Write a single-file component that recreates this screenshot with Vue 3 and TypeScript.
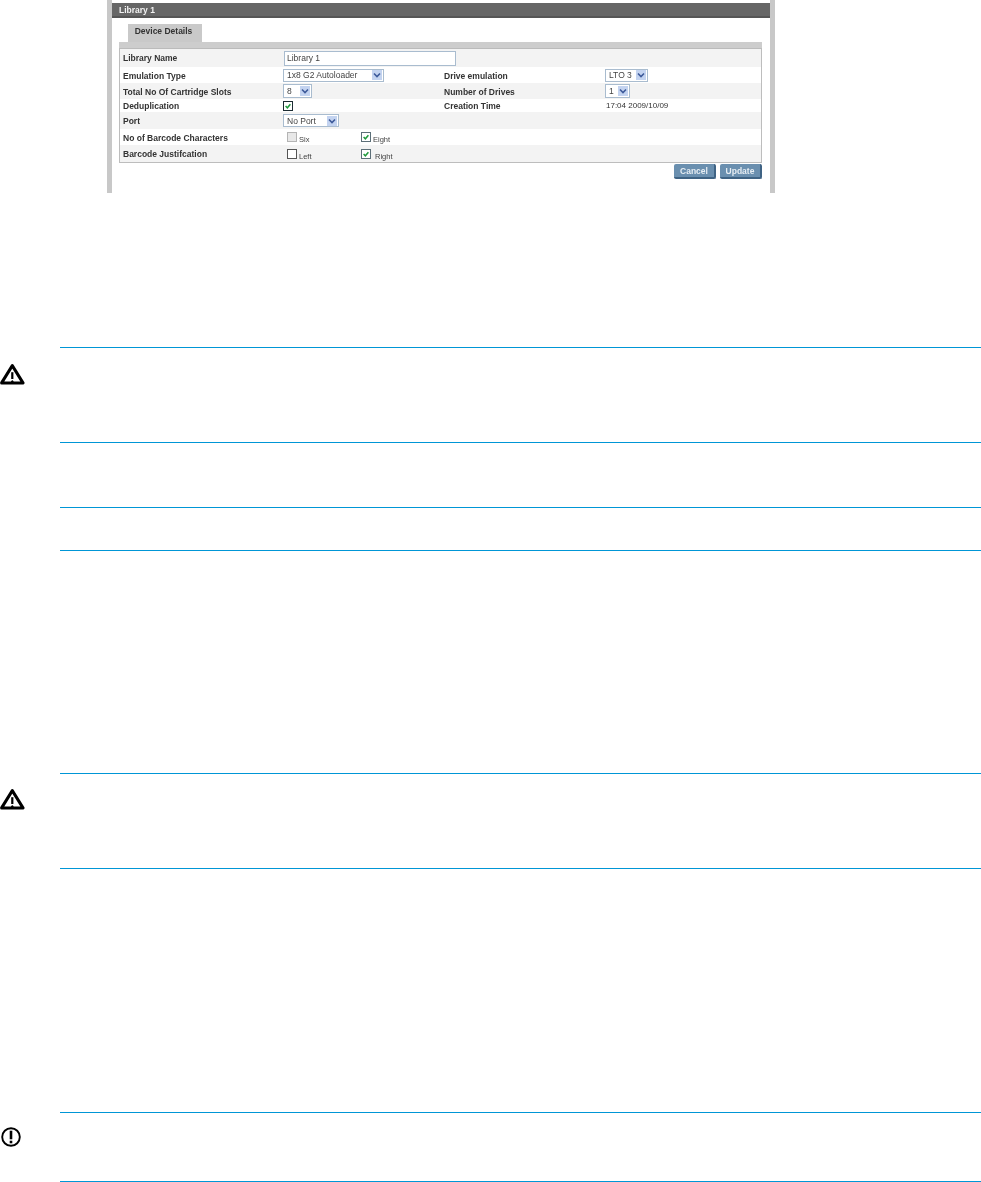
<script setup lang="ts">
interface Row {
  label: string
  second?: string
  value?: string
}
const rows: Row[] = [
  { label: 'Library Name' },
  { label: 'Emulation Type', second: 'Drive emulation' },
  { label: 'Total No Of Cartridge Slots', second: 'Number of Drives' },
  { label: 'Deduplication', second: 'Creation Time', value: '17:04 2009/10/09' },
  { label: 'Port' },
  { label: 'No of Barcode Characters' },
  { label: 'Barcode Justifcation' }
]
</script>

<template>
  <div class="page">
    <section class="shot">
      <div class="shot-inner">
        <header class="title">Library 1</header>
        <div class="tabs"><span class="tab">Device Details</span></div>
        <div class="strip"></div>
        <div class="table">
          <div v-for="(r, i) in rows" :key="r.label" class="row" :class="'r' + i">
            <span class="label">{{ r.label }}</span>
            <div class="val">
              <template v-if="i === 0"><span class="input">Library 1</span></template>
              <template v-else-if="i === 1">
                <span class="select w100"><span class="seltext">1x8 G2 Autoloader</span><i class="arrow"><svg viewBox="0 0 8 6"><path d="M1 1.5 4 4.5 7 1.5" /></svg></i></span>
              </template>
              <template v-else-if="i === 2">
                <span class="select w28 tall"><span class="seltext">8</span><i class="arrow"><svg viewBox="0 0 8 6"><path d="M1 1.5 4 4.5 7 1.5" /></svg></i></span>
              </template>
              <template v-else-if="i === 3">
                <span class="check dark"><svg viewBox="0 0 10 10"><path d="M2 5 4.2 7.2 8 2.8" /></svg></span>
              </template>
              <template v-else-if="i === 4">
                <span class="select w55"><span class="seltext">No Port</span><i class="arrow"><svg viewBox="0 0 8 6"><path d="M1 1.5 4 4.5 7 1.5" /></svg></i></span>
              </template>
              <template v-else-if="i === 5">
                <div class="opts">
                  <span class="opt"><span class="check off"></span><span class="small">Six</span></span>
                  <span class="opt"><span class="check"><svg viewBox="0 0 10 10"><path d="M2 5 4.2 7.2 8 2.8" /></svg></span><span class="small">Eight</span></span>
                </div>
              </template>
              <template v-else>
                <div class="opts">
                  <span class="opt"><span class="check empty"></span><span class="small">Left</span></span>
                  <span class="opt"><span class="check"><svg viewBox="0 0 10 10"><path d="M2 5 4.2 7.2 8 2.8" /></svg></span><span class="small gap">Right</span></span>
                </div>
              </template>
            </div>
            <span class="label">{{ r.second }}</span>
            <div class="val">
              <span v-if="i === 1" class="select w43"><span class="seltext">LTO 3</span><i class="arrow"><svg viewBox="0 0 8 6"><path d="M1 1.5 4 4.5 7 1.5" /></svg></i></span>
              <span v-else-if="i === 2" class="select w24 tall"><span class="seltext">1</span><i class="arrow"><svg viewBox="0 0 8 6"><path d="M1 1.5 4 4.5 7 1.5" /></svg></i></span>
              <span v-else-if="r.value" class="time">{{ r.value }}</span>
            </div>
          </div>
        </div>
        <div class="actions">
          <span class="btn">Cancel</span>
          <span class="btn">Update</span>
        </div>
      </div>
    </section>

    <section class="notes">
      <div class="note n95">
        <svg class="warn" viewBox="0 0 25 24"><path class="tri" d="M12.3 2.6 23 19.9H1.6Z" /><path class="mark" d="M12.3 9.2v6.8" /><path class="dot" d="M12.3 17.2v2.4M11 18.4h2.6" /></svg>
      </div>
      <div class="note n65"></div>
      <div class="note n43"></div>
      <div class="note n223"></div>
      <div class="note n95">
        <svg class="warn second" viewBox="0 0 25 24"><path class="tri" d="M12.3 2.6 23 19.9H1.6Z" /><path class="mark" d="M12.3 9.2v6.8" /><path class="dot" d="M12.3 17.2v2.4M11 18.4h2.6" /></svg>
      </div>
      <div class="note n244"></div>
      <div class="note n69 last">
        <svg class="imp" viewBox="0 0 20 20"><circle cx="10" cy="10" r="8.8" /><path d="M10 3.7v8.6" /><path d="M10 13.7v2.6" /></svg>
      </div>
    </section>
  </div>
</template>

<style scoped>
.page {
  width: 981px;
  height: 1182px;
  position: relative;
  background: #fff;
  font-family: "Liberation Sans", Arial, sans-serif;
  overflow: hidden;
}
.shot {
  margin-left: 107px;
  width: 668px;
  height: 193px;
  box-sizing: border-box;
  border-left: 5px solid #c8c8c8;
  border-right: 5px solid #c8c8c8;
  padding-top: 3px;
}
.shot-inner {
  filter: blur(0.4px);
}
.title {
  height: 15px;
  box-sizing: border-box;
  background: #666;
  border-bottom: 2px solid #555;
  color: #f2f2f2;
  font-size: 8.5px;
  font-weight: 700;
  line-height: 14px;
  padding-left: 7px;
}
.tabs {
  margin-top: 6px;
  padding-left: 16px;
  height: 18px;
}
.tab {
  display: block;
  width: 74px;
  height: 18px;
  box-sizing: border-box;
  padding-right: 3px;
  background: #c9c9c9;
  color: #333;
  font-size: 8.5px;
  font-weight: 700;
  line-height: 15px;
  text-align: center;
}
.strip {
  height: 6px;
  margin: 0 8px 0 7px;
  background: #cdcdcd;
}
.table {
  margin: 0 8px 0 7px;
  border: 1px solid #bdbdbd;
  border-top-color: #bbb;
}
.row {
  display: grid;
  grid-template-columns: 160px 161px 161px 1fr;
  align-items: center;
  padding-left: 3px;
  box-sizing: border-box;
}
.r0 { height: 18px; background: #f3f3f3; }
.r1 { height: 16px; background: #fff; }
.r2 { height: 16px; background: #f3f3f3; }
.r3 { height: 13px; background: #fff; }
.r4 { height: 17px; background: #f3f3f3; }
.r5 { height: 16px; background: #fff; }
.r6 { height: 17px; background: #f3f3f3; }
.label {
  color: #333;
  font-size: 8.5px;
  font-weight: 700;
  white-space: nowrap;
}
.r1 .label,
.r2 .label,
.r5 .label {
  padding-top: 1px;
}
.val {
  display: flex;
  align-items: center;
  color: #333;
  font-size: 8.5px;
  min-width: 0;
}
.input {
  flex: none;
  width: 172px;
  height: 15px;
  box-sizing: border-box;
  margin-left: 1px;
  border: 1px solid #a9bccf;
  background: #fff;
  padding-left: 2px;
  line-height: 13px;
  color: #444;
}
.select {
  display: flex;
  flex: none;
  align-items: center;
  justify-content: space-between;
  height: 13px;
  box-sizing: border-box;
  border: 1px solid #a9bccf;
  background: #fff;
  padding: 0 1px 0 3px;
  color: #444;
}
.select.tall { height: 14px; }
.seltext { white-space: nowrap; }
.w100 { width: 101px; }
.w28 { width: 29px; }
.w55 { width: 56px; }
.w43 { width: 43px; }
.w24 { width: 25px; }
.arrow {
  display: flex;
  width: 10px;
  height: 10px;
  background: #c3d3f0;
  align-items: center;
  justify-content: center;
}
.arrow svg { width: 8px; height: 6px; }
.arrow path { fill: none; stroke: #3d5a9a; stroke-width: 1.6; }
.check {
  display: inline-flex;
  width: 10px;
  height: 10px;
  box-sizing: border-box;
  border: 1px solid #5c6f78;
  background: #fff;
  flex: none;
}
.check svg { width: 8px; height: 8px; }
.check path { fill: none; stroke: #1f9a3c; stroke-width: 1.9; }
.check.dark { border-color: #1c2c33; }
.check.off { background: #e8e8e8; border-color: #b4b4b4; }
.check.empty { border-color: #555; }
.opts {
  display: grid;
  grid-template-columns: 74px 1fr;
  padding-left: 4px;
  width: 130px;
}
.opt { display: flex; align-items: flex-end; }
.small {
  font-size: 7.5px;
  margin-left: 2px;
  line-height: 9px;
  color: #444;
  transform: translateY(2px);
}
.small.gap { margin-left: 4px; }
.time { color: #333; font-size: 8px; padding-left: 1px; }
.actions {
  display: flex;
  justify-content: flex-end;
  gap: 4px;
  margin: 1px 8px 0 0;
}
.btn {
  width: 42px;
  height: 15px;
  box-sizing: border-box;
  background: #6a8faf;
  border-right: 2px solid #3f6384;
  border-bottom: 2px solid #3f6384;
  border-radius: 2px;
  color: #e6edf3;
  font-size: 8.5px;
  font-weight: 700;
  line-height: 15px;
  text-align: center;
}
.notes {
  margin-top: 154px;
}
.note {
  position: relative;
  margin-left: 60px;
  border-top: 1px solid #0096d6;
  box-sizing: border-box;
}
.n95 { height: 95px; }
.n65 { height: 65px; }
.n43 { height: 43px; }
.n223 { height: 223px; }
.n244 { height: 244px; }
.n69 { height: 70px; }
.last { border-bottom: 1px solid #0096d6; }
.warn {
  position: absolute;
  left: -60px;
  top: 15px;
  width: 25px;
  height: 24px;
}
.warn.second { top: 14px; }
.tri { fill: #fff; stroke: #000; stroke-width: 3; stroke-linejoin: round; }
.mark { stroke: #000; stroke-width: 2.2; fill: none; }
.dot { stroke: #000; stroke-width: 1; fill: none; }
.imp {
  position: absolute;
  left: -59px;
  top: 14px;
  width: 20px;
  height: 20px;
}
.imp circle { fill: none; stroke: #000; stroke-width: 1.9; }
.imp path { stroke: #000; stroke-width: 2.6; fill: none; }
</style>

<style>
html, body { background: #fff; }
</style>
